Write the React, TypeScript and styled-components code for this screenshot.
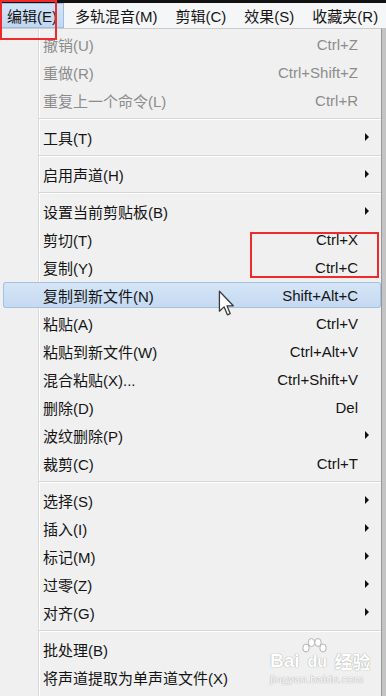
import styled, { createGlobalStyle, css } from "styled-components";

const GlobalStyle = createGlobalStyle`
  html, body {
    margin: 0;
    padding: 0;
  }
  body {
    width: 386px;
    height: 696px;
    overflow: hidden;
    background: #c4c4c4;
    font-family: "Liberation Sans", "Noto Sans CJK SC", sans-serif;
  }
`;

const Screen = styled.div`
  position: relative;
  width: 386px;
  height: 696px;
  overflow: hidden;
  background: #c4c4c4;
`;

const TopEdge = styled.div`
  height: 3px;
  background: #121212;
`;

const MenuBar = styled.div`
  display: flex;
  align-items: stretch;
  gap: 4px;
  height: 25px;
  padding-left: 0;
  background: #f5f6f7;
  font-size: 15px;
  color: #151515;
`;

const BarItem = styled.div<{ $active?: boolean }>`
  display: flex;
  align-items: center;
  padding: 0 7px;
  white-space: nowrap;
  ${({ $active }) =>
    $active &&
    css`
      background: linear-gradient(#d3e4f6, #c1d7f0);
      box-shadow: inset 0 0 0 1px #9dbde2;
    `}
`;

const Popup = styled.div`
  width: 378px;
  height: 680px;
  padding: 1px 0 0 3px;
  border-top: 1px solid #cdcdcd;
  border-right: 1px solid #979797;
  background:
    linear-gradient(
      to right,
      transparent 38px,
      #dadada 38px,
      #dadada 39px,
      #ffffff 39px,
      #ffffff 40px,
      transparent 40px
    ),
    #f0f0f0;
  font-size: 15px;
  color: #141414;
`;

const Row = styled.div<{ $disabled?: boolean; $hot?: boolean }>`
  display: grid;
  grid-template-columns: 1fr auto 23px;
  align-items: center;
  height: 28px;
  padding-left: 40px;
  white-space: nowrap;
  color: ${({ $disabled }) => ($disabled ? "#8c8c8c" : "#141414")};
  ${({ $hot }) =>
    $hot &&
    css`
      height: 26px;
      margin: 1px 0;
      border-radius: 3px;
      background: linear-gradient(#d6e6f7, #c4d9f1);
      box-shadow: inset 0 0 0 1px #a4c2e6;
    `}
`;

const Label = styled.span``;

const Shortcut = styled.span`
  text-align: right;
`;

const Arrow = styled.span`
  display: flex;
  padding-left: 7px;
  &::before {
    content: "";
    width: 0;
    height: 0;
    border-top: 4px solid transparent;
    border-bottom: 4px solid transparent;
    border-left: 4px solid #111;
  }
`;

const Separator = styled.div`
  display: flex;
  align-items: center;
  height: 9px;
  padding-left: 36px;
  &::after {
    content: "";
    flex: 1;
    height: 1px;
    background: #d6d6d6;
    border-bottom: 1px solid #ffffff;
  }
`;

const RedBox = styled.div<{ $x: number; $y: number; $w: number; $h: number }>`
  position: absolute;
  left: ${({ $x }) => $x}px;
  top: ${({ $y }) => $y}px;
  width: ${({ $w }) => $w}px;
  height: ${({ $h }) => $h}px;
  box-sizing: border-box;
  border: 2px solid #ee2a2a;
  pointer-events: none;
`;

const Cursor = styled.svg`
  position: absolute;
  left: 218px;
  top: 290px;
`;

const Watermark = styled.div`
  position: absolute;
  left: 270px;
  top: 640px;
  display: flex;
  flex-direction: column;
  align-items: flex-start;
  color: #ffffff;
  text-shadow: 0 0 1px #a9a9a9, 0 0 1px #a9a9a9;
`;

const LogoLine = styled.div`
  display: flex;
  align-items: flex-end;
  height: 30px;
  font-size: 19px;
  font-weight: bold;
  line-height: 1;
`;

const Paw = styled.div`
  position: relative;
  display: flex;
  align-items: flex-end;
  width: 30px;
  height: 30px;
  margin-left: -1px;
  svg {
    position: absolute;
    left: 0;
    top: -2px;
  }
  span {
    position: relative;
    margin-left: 9px;
    font-size: 16px;
  }
`;

const Jingyan = styled.span`
  margin-left: 6px;
  font-size: 18px;
  font-family: "Noto Sans CJK SC", sans-serif;
  font-weight: bold;
`;

const Site = styled.div`
  margin-top: 3px;
  font-size: 11px;
  letter-spacing: 0.3px;
`;

type Item =
  | { sep: true }
  | { label: string; key?: string; sub?: boolean; disabled?: boolean; hot?: boolean };

const items: Item[] = [
  { label: "撤销(U)", key: "Ctrl+Z", disabled: true },
  { label: "重做(R)", key: "Ctrl+Shift+Z", disabled: true },
  { label: "重复上一个命令(L)", key: "Ctrl+R", disabled: true },
  { sep: true },
  { label: "工具(T)", sub: true },
  { sep: true },
  { label: "启用声道(H)", sub: true },
  { sep: true },
  { label: "设置当前剪贴板(B)", sub: true },
  { label: "剪切(T)", key: "Ctrl+X" },
  { label: "复制(Y)", key: "Ctrl+C" },
  { label: "复制到新文件(N)", key: "Shift+Alt+C", hot: true },
  { label: "粘贴(A)", key: "Ctrl+V" },
  { label: "粘贴到新文件(W)", key: "Ctrl+Alt+V" },
  { label: "混合粘贴(X)...", key: "Ctrl+Shift+V" },
  { label: "删除(D)", key: "Del" },
  { label: "波纹删除(P)", sub: true },
  { label: "裁剪(C)", key: "Ctrl+T" },
  { sep: true },
  { label: "选择(S)", sub: true },
  { label: "插入(I)", sub: true },
  { label: "标记(M)", sub: true },
  { label: "过零(Z)", sub: true },
  { label: "对齐(G)", sub: true },
  { sep: true },
  { label: "批处理(B)" },
  { label: "将声道提取为单声道文件(X)" },
  { label: "" },
];

const barItems = ["编辑(E)", "多轨混音(M)", "剪辑(C)", "效果(S)", "收藏夹(R)"];

const App = () => {
  return (
    <Screen>
      <GlobalStyle />
      <TopEdge />
      <MenuBar>
        {barItems.map((b, i) => (
          <BarItem key={b} $active={i === 0}>
            {b}
          </BarItem>
        ))}
      </MenuBar>
      <Popup>
        {items.map((it, i) =>
          "sep" in it ? (
            <Separator key={i} />
          ) : (
            <Row key={i} $disabled={it.disabled} $hot={it.hot}>
              <Label>{it.label}</Label>
              <Shortcut>{it.key}</Shortcut>
              {it.sub ? <Arrow /> : <span />}
            </Row>
          )
        )}
      </Popup>

      <RedBox $x={0} $y={0} $w={57} $h={40} />
      <RedBox $x={250} $y={232} $w={129} $h={46} />

      <Cursor width="17" height="27" viewBox="0 0 13 21">
        <path
          d="M1 1 L1 16.5 L4.6 13.1 L7.2 19.3 L9.4 18.4 L6.9 12.3 L11.8 12.3 Z"
          fill="#ffffff"
          stroke="#3a3a3a"
          strokeWidth="1"
          strokeLinejoin="round"
        />
      </Cursor>

      <Watermark>
        <LogoLine>
          Bai
          <Paw>
            <svg width="30" height="26" viewBox="0 0 30 26">
              <g fill="#ffffff" stroke="#b4b4b4" strokeWidth="1">
                <ellipse cx="7" cy="10" rx="3.2" ry="4" />
                <ellipse cx="12.5" cy="4.5" rx="3.2" ry="4" />
                <ellipse cx="19" cy="4.5" rx="3.2" ry="4" />
                <ellipse cx="24" cy="10" rx="3.2" ry="4" />
              </g>
            </svg>
            <span>du</span>
          </Paw>
          <Jingyan>经验</Jingyan>
        </LogoLine>
        <Site>jingyan.baidu.com</Site>
      </Watermark>
    </Screen>
  );
};

export default App;
